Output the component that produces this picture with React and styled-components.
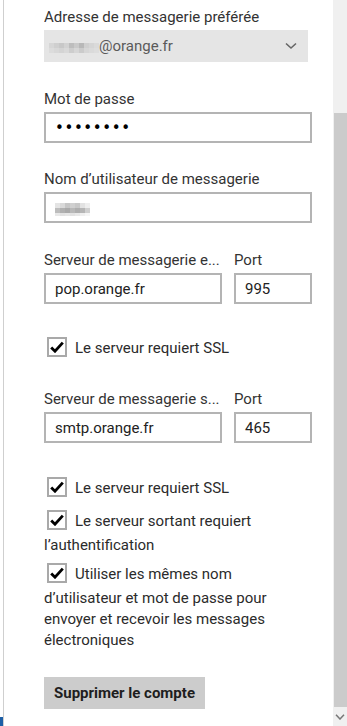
import React from "react";
import styled, { createGlobalStyle } from "styled-components";

const Global = createGlobalStyle`
  html, body { margin: 0; padding: 0; background: #ffffff; overflow: hidden; }
  body { font-family: Roboto, "Noto Sans", sans-serif; color: #2b2b2b; }
`;

const Screen = styled.div`
  display: flex;
  width: 347px;
  height: 726px;
  background: #ffffff;
`;

const Edge = styled.div`
  width: 4px;
  display: flex;
  flex-direction: column;
  justify-content: flex-end;
  border-right: 1px solid #cfcfcf;
  box-sizing: border-box;
`;

const EdgeMark = styled.div`
  width: 3px;
  height: 9px;
  background: #1d5fa6;
`;

const Panel = styled.div`
  flex: 1;
  padding: 7px 0 0 40px;
  box-sizing: border-box;
  font-size: 15px;
`;

const Field = styled.div`
  display: flex;
  flex-direction: column;
  gap: 3px;
  width: ${(p) => (p.$w ? `${p.$w}px` : "auto")};
  margin-top: ${(p) => p.$mt || 0}px;
`;

const Label = styled.div`
  font-size: 15px;
  line-height: 20px;
  color: #333333;
  white-space: nowrap;
  overflow: hidden;
`;

const SelectBox = styled.div`
  width: 264px;
  height: 32px;
  background: #e5e5e5;
  display: flex;
  align-items: center;
  padding: 0 11px 0 5px;
  box-sizing: border-box;
  color: #5a5a5a;
`;

const SelectText = styled.div`
  flex: 1;
  display: flex;
  align-items: center;
  font-size: 15px;
`;

const Input = styled.div`
  width: ${(p) => p.$w || 268}px;
  height: 31px;
  border: 2px solid #b4b4b4;
  box-sizing: border-box;
  display: flex;
  align-items: center;
  padding-left: 9px;
  font-size: 15px;
  color: #222222;
  background: #ffffff;
`;

const Pair = styled.div`
  display: flex;
  gap: 12px;
  margin-top: ${(p) => p.$mt || 0}px;
`;

const Dots = styled.div`
  font-size: 15px;
  letter-spacing: 0.6px;
  color: #000;
  font-family: "DejaVu Sans", sans-serif;
`;

const CheckLine = styled.div`
  font-size: 15px;
  line-height: 21px;
  color: #2b2b2b;
  width: 264px;
  margin-top: ${(p) => p.$mt || 0}px;
`;

const Box = styled.span`
  display: inline-block;
  width: 20px;
  height: 20px;
  border: 2px solid #a9a9a9;
  box-sizing: border-box;
  vertical-align: -9px;
  margin: 0 8px 5px 3px;
  background: #fff;
  svg { display: block; margin: 2px 0 0 1px; }
`;

const Button = styled.button`
  display: block;
  margin-top: 26px;
  height: 32px;
  padding: 0 10px;
  border: none;
  background: #cccccc;
  font-family: Roboto, "Noto Sans", sans-serif;
  font-size: 15px;
  font-weight: 700;
  color: #1e1e1e;
`;

const Scroll = styled.div`
  width: 14px;
  display: flex;
  flex-direction: column;
  background: #f0f0f0;
`;

const ScrollSpace = styled.div`
  height: ${(p) => p.$h}px;
`;

const Thumb = styled.div`
  flex: 1;
  background: #cbcbcb;
  margin-left: 1px;
`;

const ScrollArrow = styled.div`
  height: 19px;
  display: flex;
  align-items: center;
  justify-content: center;
`;

const Blur = ({ cells, w }) => (
  <svg width={w} height="16" viewBox={`0 0 ${w} 16`} style={{ display: "block" }}>
    {cells.map(([x, y, c], i) => (
      <rect key={i} x={x} y={y} width="5" height="5" fill={c} />
    ))}
  </svg>
);

const blurA = [
  [0, 5, "#d6d6d6"], [5, 5, "#cfcfcf"], [10, 5, "#c8c8c8"], [15, 5, "#d2d2d2"], [20, 5, "#bdbdbd"], [25, 5, "#c9c9c9"],
  [30, 5, "#b8b8b8"], [35, 5, "#cfcfcf"], [40, 5, "#d5d5d5"], [45, 5, "#dadada"],
  [0, 10, "#dcdcdc"], [5, 10, "#d8d8d8"], [10, 10, "#d4d4d4"], [15, 10, "#d9d9d9"], [20, 10, "#cdcdcd"], [25, 10, "#d6d6d6"],
  [30, 10, "#cbcbcb"], [35, 10, "#d6d6d6"], [40, 10, "#dadada"], [45, 10, "#dddddd"],
];

const blurB = [
  [0, 3, "#e4e4e4"], [5, 3, "#d9d9d9"], [10, 3, "#c6c6c6"], [15, 3, "#d0d0d0"], [20, 3, "#c8c8c8"], [25, 3, "#e2e2e2"], [30, 3, "#eeeeee"],
  [0, 8, "#bdbdbd"], [5, 8, "#b0b0b0"], [10, 8, "#a9a9a9"], [15, 8, "#b8b8b8"], [20, 8, "#aeaeae"], [25, 8, "#b5b5b5"], [30, 8, "#cfcfcf"],
  [0, 13, "#e8e8e8"], [5, 13, "#e2e2e2"], [10, 13, "#e6e6e6"], [15, 13, "#e2e2e2"], [20, 13, "#e8e8e8"], [25, 13, "#efefef"], [30, 13, "#f6f6f6"],
];

const Check = () => (
  <Box>
    <svg width="14" height="12" viewBox="0 0 14 12">
      <path d="M1.2 6.4 L5 10.2 L12.8 1.6" fill="none" stroke="#000" strokeWidth="2.8" />
    </svg>
  </Box>
);

export default function App() {
  return (
    <Screen>
      <Global />
      <Edge>
        <EdgeMark />
      </Edge>
      <Panel>
        <Field>
          <Label>Adresse de messagerie préférée</Label>
          <SelectBox>
            <SelectText>
              <Blur cells={blurA} w={50} />
              @orange.fr
            </SelectText>
            <svg width="12" height="8" viewBox="0 0 12 8">
              <path d="M1 1.5 L6 6 L11 1.5" fill="none" stroke="#666" strokeWidth="1.6" />
            </svg>
          </SelectBox>
        </Field>
        <Field $mt={27}>
          <Label>Mot de passe</Label>
          <Input>
            <Dots>••••••••</Dots>
          </Input>
        </Field>
        <Field $mt={26}>
          <Label>Nom d’utilisateur de messagerie</Label>
          <Input>
            <Blur cells={blurB} w={36} />
          </Input>
        </Field>
        <Pair $mt={27}>
          <Field $w={178}>
            <Label>Serveur de messagerie e...</Label>
            <Input $w={178}>pop.orange.fr</Input>
          </Field>
          <Field $w={78}>
            <Label>Port</Label>
            <Input $w={78}>995</Input>
          </Field>
        </Pair>
        <CheckLine $mt={33}>
          <Check />Le serveur requiert SSL
        </CheckLine>
        <Pair $mt={27}>
          <Field $w={178}>
            <Label>Serveur de messagerie s...</Label>
            <Input $w={178}>smtp.orange.fr</Input>
          </Field>
          <Field $w={78}>
            <Label>Port</Label>
            <Input $w={78}>465</Input>
          </Field>
        </Pair>
        <CheckLine $mt={34}>
          <Check />Le serveur requiert SSL
        </CheckLine>
        <CheckLine $mt={8}>
          <Check />Le serveur sortant requiert l’authentification
        </CheckLine>
        <CheckLine $mt={7}>
          <Check />Utiliser les mêmes nom d’utilisateur et mot de passe pour envoyer et recevoir les messages électroniques
        </CheckLine>
        <Button>Supprimer le compte</Button>
      </Panel>
      <Scroll>
        <ScrollSpace $h={113} />
        <Thumb />
        <ScrollArrow>
          <svg width="10" height="6" viewBox="0 0 10 6">
            <path d="M1 0.8 L5 5 L9 0.8" fill="none" stroke="#777" strokeWidth="1.5" />
          </svg>
        </ScrollArrow>
      </Scroll>
    </Screen>
  );
}
